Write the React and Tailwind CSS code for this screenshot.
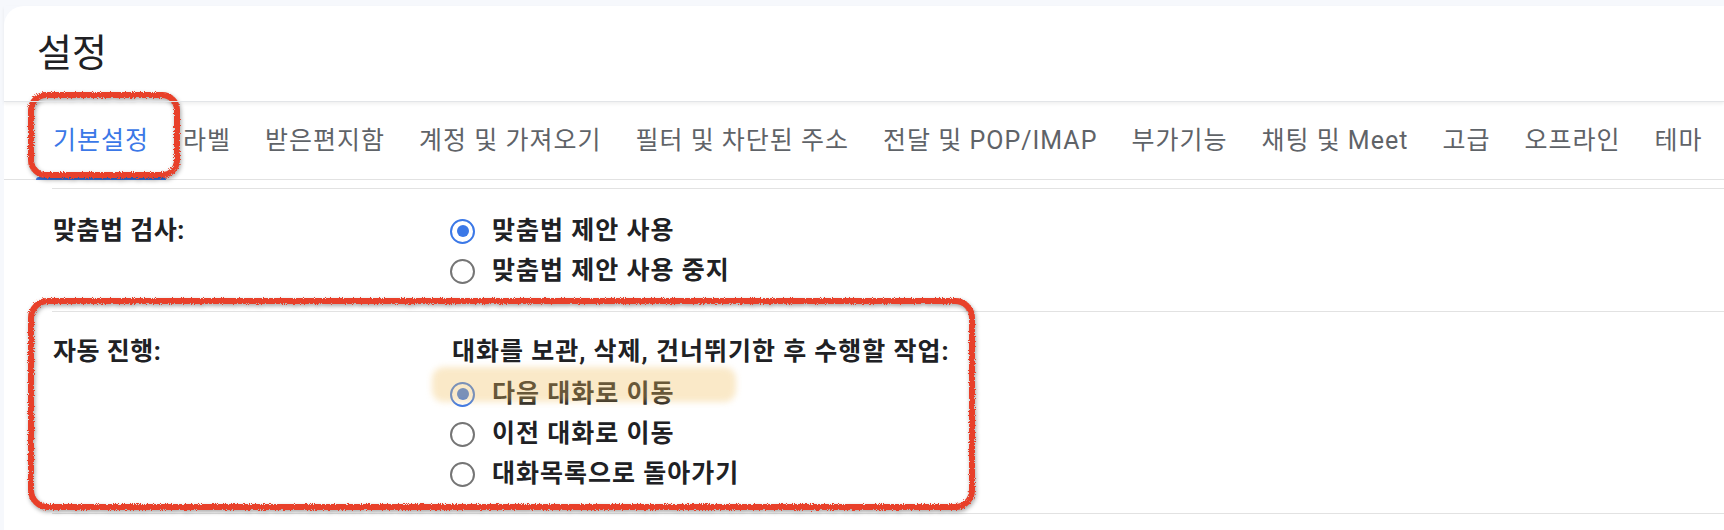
import { useState } from "react";

const tabs = [
  "기본설정",
  "라벨",
  "받은편지함",
  "계정 및 가져오기",
  "필터 및 차단된 주소",
  "전달 및 POP/IMAP",
  "부가기능",
  "채팅 및 Meet",
  "고급",
  "오프라인",
  "테마",
];

function Radio({ checked, label, onClick }) {
  return (
    <label
      onClick={onClick}
      className="flex items-center h-[40px] cursor-pointer"
    >
      {checked ? (
        <span className="w-[25px] h-[25px] rounded-full border-[2.5px] border-[#3b78e7] flex items-center justify-center shrink-0">
          <span className="w-[12px] h-[12px] rounded-full bg-[#3b78e7]" />
        </span>
      ) : (
        <span className="w-[25px] h-[25px] rounded-full border-2 border-[#757575] shrink-0" />
      )}
      <span className="ml-[17px] font-bold text-[#202124]">{label}</span>
    </label>
  );
}

export default function App() {
  const [spell, setSpell] = useState(0);
  const [advance, setAdvance] = useState(0);

  const spellOptions = ["맞춤법 제안 사용", "맞춤법 제안 사용 중지"];
  const advanceOptions = [
    "다음 대화로 이동",
    "이전 대화로 이동",
    "대화목록으로 돌아가기",
  ];

  return (
    <div
      className="relative w-full h-[530px] overflow-hidden bg-[#f6f8fc] pt-[6px] pl-[4px]"
      style={{ fontFamily: 'Roboto, "Noto Sans CJK KR", sans-serif' }}
    >
      {/* marker roughness filter for the annotations */}
      <svg className="absolute w-0 h-0">
        <defs>
          <filter id="rough" x="-5%" y="-5%" width="110%" height="110%">
            <feTurbulence type="fractalNoise" baseFrequency="0.9" numOctaves="2" seed="3" result="n" />
            <feDisplacementMap in="SourceGraphic" in2="n" scale="4" />
          </filter>
        </defs>
      </svg>

      <div className="bg-white rounded-tl-[20px] h-full">
        {/* Header */}
        <div className="relative z-10 h-[96px] pl-[33px] pt-[24px] border-b border-[#e3e5e8] shadow-[0_2px_3px_rgba(60,64,67,0.08)]">
          <h1 className="text-[38px] leading-[46px] text-[#202124]">설정</h1>
        </div>

        {/* Tabs */}
        <div className="flex h-[78px] pl-[32px] border-b border-[#e2e2e2] text-[25px] tracking-[1px]">
          {tabs.map((t, i) => (
            <div
              key={t}
              className={
                i === 0
                  ? "relative flex items-center px-[17px] text-[#3b78e7] whitespace-nowrap"
                  : "relative flex items-center px-[17px] text-[#5f6368] whitespace-nowrap"
              }
            >
              {t}
              {i === 0 && (
                <span className="absolute left-0 right-0 bottom-[-1px] h-[3px] bg-[#3b78e7] rounded-t-sm" />
              )}
            </div>
          ))}
        </div>

        {/* Settings rows */}
        <div className="ml-[48px] mt-[8px] text-[25px] tracking-[1px]">
          <div className="flex border-t border-[#e2e2e2] pt-[22px] pb-[20px]">
            <div className="w-[398px] h-[40px] flex items-center font-bold text-[#202124] pl-[1px] tracking-[0.5px]">
              맞춤법 검사:
            </div>
            <div>
              {spellOptions.map((o, i) => (
                <Radio
                  key={o}
                  label={o}
                  checked={spell === i}
                  onClick={() => setSpell(i)}
                />
              ))}
            </div>
          </div>

          <div className="flex border-t border-b border-[#e2e2e2] pt-[20px] pb-[19px]">
            <div className="w-[398px] h-[40px] flex items-center font-bold text-[#202124] pl-[1px] tracking-[0.5px]">
              자동 진행:
            </div>
            <div>
              <div className="h-[40px] mb-[2px] flex items-center font-bold text-[#202124] pl-[2px]">
                대화를 보관, 삭제, 건너뛰기한 후 수행할 작업:
              </div>
              {advanceOptions.map((o, i) => (
                <Radio
                  key={o}
                  label={o}
                  checked={advance === i}
                  onClick={() => setAdvance(i)}
                />
              ))}
            </div>
          </div>
        </div>
      </div>

      {/* Highlighter mark */}
      <div className="absolute left-[432px] top-[367px] w-[304px] h-[35px] rounded-[12px] bg-[#f0c060]/35 blur-[3px] pointer-events-none" />

      {/* Red annotation boxes */}
      <div className="absolute left-[28px] top-[92px] w-[152px] h-[86px] drop-shadow-[1px_2px_2px_rgba(0,0,0,0.35)] pointer-events-none">
        <div className="w-full h-full rounded-[18px] border-[6px] border-[#e8412a] [filter:url(#rough)]" />
      </div>
      <div className="absolute left-[28px] top-[298px] w-[947px] h-[212px] drop-shadow-[1px_2px_2px_rgba(0,0,0,0.35)] pointer-events-none">
        <div className="w-full h-full rounded-[20px] border-[6px] border-[#e8412a] [filter:url(#rough)]" />
      </div>
    </div>
  );
}
